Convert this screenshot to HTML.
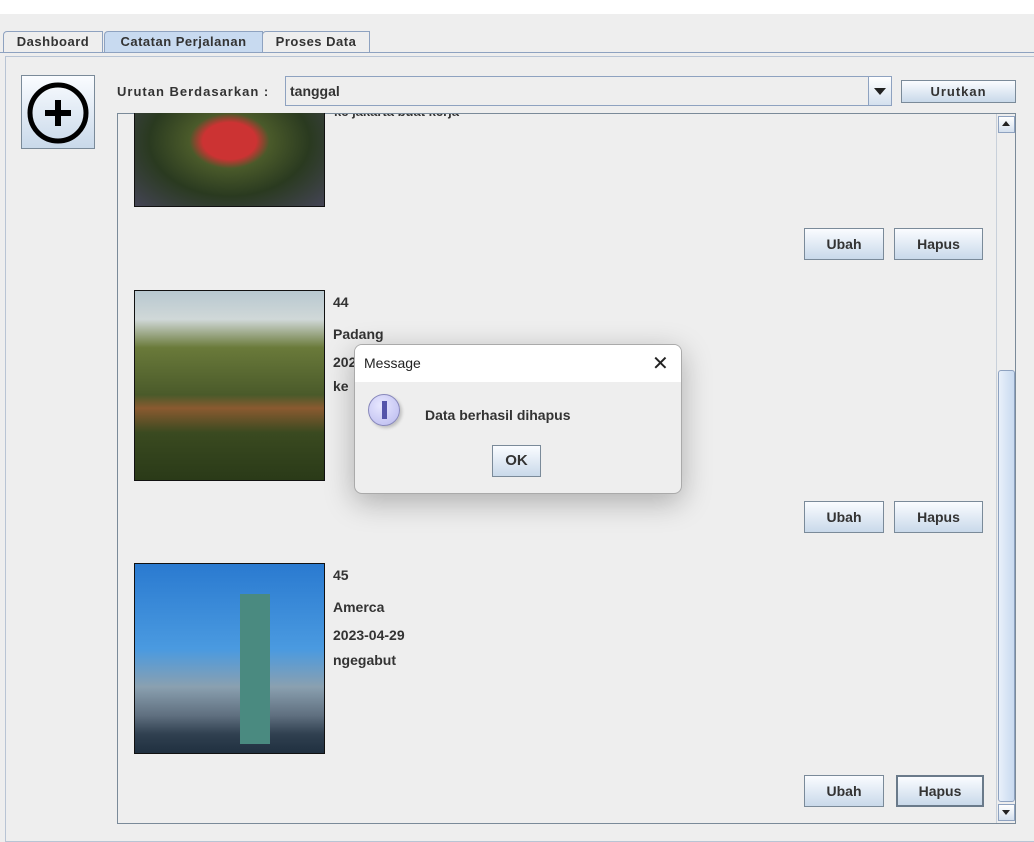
<!DOCTYPE html><html><head><style>
body{margin:0;width:1034px;height:841px;background:#eeeeee;font-family:"Liberation Sans",sans-serif;position:relative;overflow:hidden;font-size:13px;color:#333}
.a{position:absolute}
.b{font-weight:bold}
.tab{position:absolute;top:31px;height:20px;border:1px solid #8ea2c0;border-bottom:none;background:#eeeeee;font-weight:bold;font-size:13px;line-height:20px;text-align:center;color:#333;border-radius:4px 0 0 0;letter-spacing:.5px}
.btn{position:absolute;border:1px solid #7a8a99;background:linear-gradient(#fafcff,#c9d9ea);font-weight:bold;font-size:14px;text-align:center;color:#333}
.img{position:absolute;left:134px;width:189px;height:189px;border:1px solid #111}
.t{position:absolute;left:333px;font-weight:bold;font-size:14px;color:#333}
</style></head><body>
<div class="a" style="left:0;top:0;width:1034px;height:14px;background:#fff"></div>
<div class="tab" style="left:3px;width:98px">Dashboard</div>
<div class="tab" style="left:104px;width:157px;background:#c8daf0;height:21px">Catatan Perjalanan</div>
<div class="tab" style="left:262px;width:106px">Proses Data</div>
<div class="a" style="left:0;top:52px;width:1034px;height:0;border-top:1px solid #8ea2c0"></div>
<div class="a" style="left:5px;top:56px;width:1030px;height:784px;border:1px solid #b8c4d4;border-right:none"></div>
<div class="btn" style="left:21px;top:75px;width:72px;height:72px;background:linear-gradient(#fafcff,#c9d9ea)">
<svg width="72" height="72" viewBox="0 0 72 72"><circle cx="36" cy="37" r="28" fill="none" stroke="#000" stroke-width="5"/><path d="M36 24V50M23 37H49" stroke="#000" stroke-width="6"/></svg></div>
<div class="a b" style="left:117px;top:84px;font-size:13px;letter-spacing:1px">Urutan Berdasarkan :</div>
<div class="a" style="left:285px;top:76px;width:605px;height:28px;border:1px solid #8ea2c0;background:#eeeeee"><span class="b" style="position:absolute;left:4px;top:6px;font-size:14px">tanggal</span>
<div class="a" style="right:0;top:0;width:22px;height:28px;border-left:1px solid #8ea2c0;background:linear-gradient(#fff,#d4e0ee)"><div class="a" style="left:5px;top:11px;border:6px solid transparent;border-top:7px solid #222;border-bottom:0"></div></div></div>
<div class="btn" style="left:901px;top:80px;width:113px;height:21px;font-size:13px;line-height:21px;letter-spacing:1px">Urutkan</div>
<div class="a" style="left:117px;top:113px;width:897px;height:709px;border:1px solid #7a8a99;overflow:hidden">
<div class="a" style="left:216px;top:-10px;font-weight:bold;font-size:13px">ke jakarta buat kerja</div>
<div class="a" style="left:878px;top:0;width:19px;height:709px;background:#eeeeee;border-left:1px solid #c8d0da"></div>
<div class="a" style="left:880px;top:2px;width:15px;height:15px;border:1px solid #8ea2c0;background:linear-gradient(#fff,#d4e0ee)"><div class="a" style="left:3px;top:4px;border:4px solid transparent;border-bottom:5px solid #222;border-top:0"></div></div>
<div class="a" style="left:880px;top:256px;width:15px;height:430px;border:1px solid #8ea2c0;border-radius:3px;background:linear-gradient(90deg,#e8f0fa,#c9daf0)"></div>
<div class="a" style="left:880px;top:690px;width:15px;height:15px;border:1px solid #8ea2c0;background:linear-gradient(#fff,#d4e0ee)"><div class="a" style="left:3px;top:5px;border:4px solid transparent;border-top:5px solid #222;border-bottom:0"></div></div>
</div>
<div class="img" style="top:113px;height:93px;border-top:none;background:radial-gradient(ellipse at 50% 30%,#c33 0 20%,#4a5a2a 30%,#2a3a20 60%,#445 100%)"></div>
<div class="btn" style="left:804px;top:228px;width:78px;height:30px;line-height:30px">Ubah</div>
<div class="btn" style="left:894px;top:228px;width:87px;height:30px;line-height:30px">Hapus</div>
<div class="img" style="top:290px;background:linear-gradient(#b8c8d0 0,#d0d8d8 15%,#6a7a3a 30%,#4a5a2a 55%,#8a5a30 62%,#3a4a20 75%,#2a3a18 100%)"></div>
<div class="t" style="top:294px">44</div>
<div class="t" style="top:326px">Padang</div>
<div class="t" style="top:354px">2023</div>
<div class="t" style="top:378px">ke</div>
<div class="btn" style="left:804px;top:501px;width:78px;height:30px;line-height:30px">Ubah</div>
<div class="btn" style="left:894px;top:501px;width:87px;height:30px;line-height:30px">Hapus</div>
<div class="img" style="top:563px;background:linear-gradient(#2a7ad0 0,#4a9ae0 45%,#8aa0b0 65%,#607080 80%,#304050 90%,#203040 100%)"><div class="a" style="left:105px;top:30px;width:30px;height:150px;background:#4a8a80"></div></div>
<div class="t" style="top:567px">45</div>
<div class="t" style="top:599px">Amerca</div>
<div class="t" style="top:627px">2023-04-29</div>
<div class="t" style="top:652px">ngegabut</div>
<div class="btn" style="left:804px;top:775px;width:78px;height:30px;line-height:30px">Ubah</div>
<div class="btn" style="left:896px;top:775px;width:84px;height:28px;line-height:28px;border:2px solid #6a7a8a">Hapus</div>
<div class="a" style="left:354px;top:344px;width:326px;height:148px;border:1px solid #aaa;border-radius:8px;background:#eeeeee;box-shadow:0 8px 30px rgba(0,0,0,.28);overflow:hidden">
<div class="a" style="left:0;top:0;width:326px;height:37px;background:#fff"></div>
<div class="a" style="left:9px;top:10px;font-size:14px;color:#222">Message</div>
<div class="a" style="left:297px;top:6px;font-size:20px;color:#222">✕</div>
<div class="a" style="left:13px;top:49px;width:30px;height:30px;border-radius:50%;background:radial-gradient(circle at 40% 35%,#e8e8ff,#b8b8ee);border:1px solid #8888bb;box-shadow:2px 2px 3px rgba(0,0,0,.2)"><div class="a" style="left:13px;top:6px;width:5px;height:18px;background:#5555aa"></div></div>
<div class="a b" style="left:70px;top:62px;font-size:14px">Data berhasil dihapus</div>
<div class="btn" style="left:137px;top:100px;width:47px;height:30px;line-height:30px;border:1px solid #7a8a99;font-size:15px">OK</div>
</div>
</body></html>
